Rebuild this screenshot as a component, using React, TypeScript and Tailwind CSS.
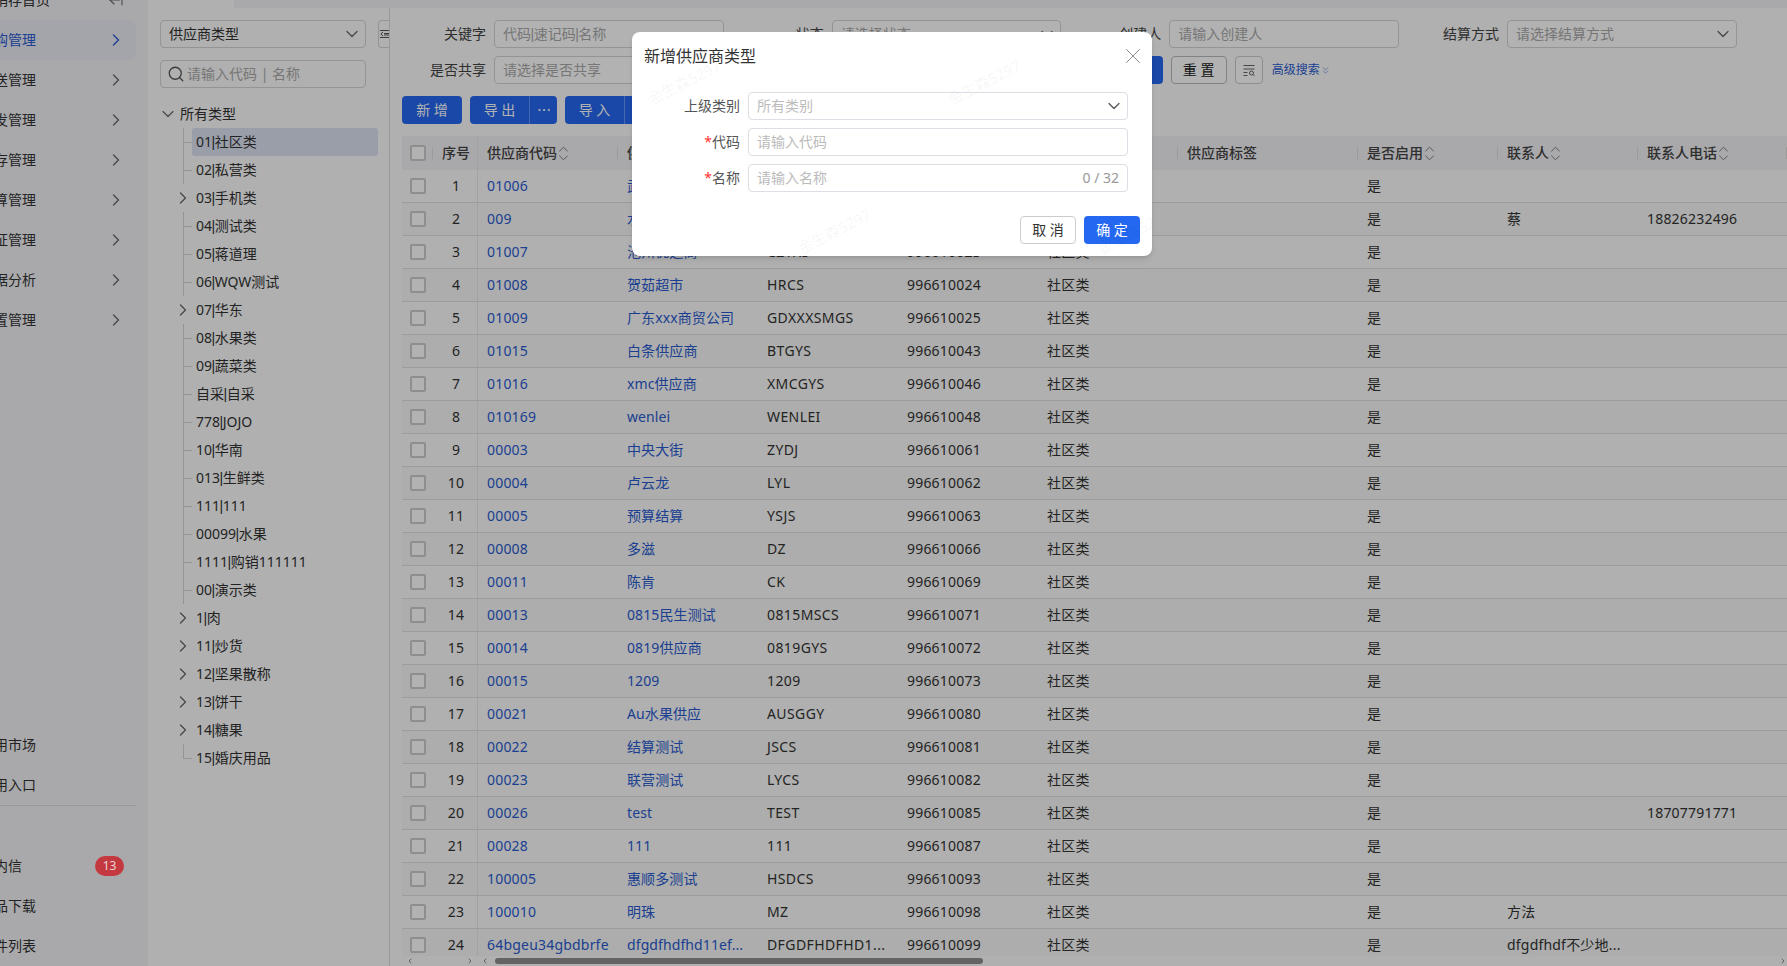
import React from "react";
import { ArrowLeftFromLine, ChevronDown, ChevronRight, ChevronLeft, ChevronsDown, ChevronsUpDown, Ellipsis, Search, X } from "lucide-react";

const FONT = "font-['Noto_Sans','Noto_Sans_CJK_SC',sans-serif]";

const menu = ["采购管理", "配送管理", "批发管理", "库存管理", "结算管理", "认证管理", "数据分析", "配置管理"];

const tree: [string, boolean][] = [
  ["01|社区类", false], ["02|私营类", false], ["03|手机类", true], ["04|测试类", false], ["05|蒋道理", false],
  ["06|WQW测试", false], ["07|华东", true], ["08|水果类", false], ["09|蔬菜类", false], ["自采|自采", false],
  ["778|JOJO", false], ["10|华南", false], ["013|生鲜类", false], ["111|111", false], ["00099|水果", false],
  ["1111|购销111111", false], ["00|演示类", false], ["1|肉", true], ["11|炒货", true], ["12|坚果散称", true],
  ["13|饼干", true], ["14|糖果", true], ["15|婚庆用品", false],
];

const rows: [string, string, string, string, string?, string?][] = [
  ["01006", "武汉供应商", "WHGYS", "996610020"],
  ["009", "水果供应商", "SGGYS", "996610021", "蔡", "18826232496"],
  ["01007", "池州优选商", "CZYXS", "996610023"],
  ["01008", "贺茹超市", "HRCS", "996610024"],
  ["01009", "广东xxx商贸公司", "GDXXXSMGS", "996610025"],
  ["01015", "白条供应商", "BTGYS", "996610043"],
  ["01016", "xmc供应商", "XMCGYS", "996610046"],
  ["010169", "wenlei", "WENLEI", "996610048"],
  ["00003", "中央大街", "ZYDJ", "996610061"],
  ["00004", "卢云龙", "LYL", "996610062"],
  ["00005", "预算结算", "YSJS", "996610063"],
  ["00008", "多滋", "DZ", "996610066"],
  ["00011", "陈肯", "CK", "996610069"],
  ["00013", "0815民生测试", "0815MSCS", "996610071"],
  ["00014", "0819供应商", "0819GYS", "996610072"],
  ["00015", "1209", "1209", "996610073"],
  ["00021", "Au水果供应", "AUSGGY", "996610080"],
  ["00022", "结算测试", "JSCS", "996610081"],
  ["00023", "联营测试", "LYCS", "996610082"],
  ["00026", "test", "TEST", "996610085", "", "18707791771"],
  ["00028", "111", "111", "996610087"],
  ["100005", "惠顺多测试", "HSDCS", "996610093"],
  ["100010", "明珠", "MZ", "996610098", "方法"],
  ["64bgeu34gbdbrfe", "dfgdfhdfhd11ef...", "DFGDFHDFHD1...", "996610099", "dfgdfhdf不少地..."],
];

const COLS = "grid grid-cols-[31px_45px_140px_140px_140px_140px_140px_180px_140px_140px_149px]";

function Piped({ text }: { text: string }) {
  const parts = text.split("|");
  return (
    <>
      {parts.map((p, i) => (
        <React.Fragment key={i}>
          {i > 0 && <span className="mx-[-0.5px] font-['Liberation_Sans',sans-serif]">|</span>}
          {p}
        </React.Fragment>
      ))}
    </>
  );
}

function Head({ label, sort }: { label: string; sort?: boolean }) {
  return (
    <div className="relative flex items-center pl-[9px] font-medium text-[#444]">
      {label}
      {sort && <ChevronsUpDown size={19} strokeWidth={1.2} className="-ml-[3px] text-[#777]" />}
      <span className="absolute right-0 top-[11px] h-[12px] w-px bg-[#ddd]" />
    </div>
  );
}

function Field({ label, placeholder, select }: { label: string; placeholder: string; select?: boolean }) {
  return (
    <div className="flex items-center pr-4">
      <label className="w-[84px] shrink-0 text-right text-[#444]">{label}</label>
      <div className="ml-2 flex h-7 flex-1 items-center justify-between rounded-[4px] border border-[#d5d5d5] bg-white pl-2 pr-[3px]">
        <span className="truncate text-[#aaa]"><Piped text={placeholder} /></span>
        {select && <ChevronDown size={20} strokeWidth={1.5} className="shrink-0 text-[#666]" />}
      </div>
    </div>
  );
}

function Watermarks() {
  const marks: { x: number; y: number }[] = [];
  for (let r = 0; r < 7; r++) {
    for (let c = 0; c < 7; c++) {
      marks.push({ x: (r % 2 ? 234 : 84) + c * 300, y: 82 + r * 149 });
    }
  }
  return (
    <>
      {marks.map((m, i) => (
        <span
          key={i}
          className="pointer-events-none absolute -translate-x-1/2 -translate-y-1/2 -rotate-[27deg] whitespace-nowrap text-[15px] text-black/[0.025]"
          style={{ left: m.x, top: m.y }}
        >
          金生森5297
        </span>
      ))}
    </>
  );
}

function ModalField({ label, req, placeholder, children }: { label: string; req?: boolean; placeholder: string; children?: React.ReactNode }) {
  return (
    <div className="flex items-center">
      <label className="w-[97px] shrink-0 text-right text-[#555]">
        {req && <span className="text-[#f33]">*</span>}
        {label}
      </label>
      <div className="ml-2 flex h-7 w-[380px] items-center justify-between rounded-[4px] border border-[#dcdfe6] bg-white pl-2 pr-[3px]">
        <span className="text-[#bbb]">{placeholder}</span>
        {children}
      </div>
    </div>
  );
}

function MenuRow({ text }: { text: string }) {
  return (
    <div className="flex h-10 items-center">
      <span className="-ml-5">{text}</span>
    </div>
  );
}

export default function App() {
  return (
    <div className={`${FONT} relative flex h-[966px] w-[1787px] overflow-hidden bg-[#fcfcfc] text-[14px] leading-5 text-[#333]`}>
      {/* main menu */}
      <aside className="flex w-[148px] shrink-0 flex-col bg-[#f2f2f5] pr-3">
        <div className="-mt-[10px] flex h-5 items-center justify-between pr-3">
          <span className="-ml-5">进销存首页</span>
          <ArrowLeftFromLine size={16} strokeWidth={1.6} className="text-[#666]" />
        </div>
        <nav className="mt-[10px] flex flex-col">
          {menu.map((m, i) => (
            <div
              key={m}
              className={`flex h-10 items-center justify-between pr-[10px] ${i === 0 ? "rounded-r-lg bg-[#ebedf5] text-[#2a5bd0]" : ""}`}
            >
              <span className="-ml-5">{m}</span>
              <ChevronRight size={20} strokeWidth={1.6} className={i === 0 ? "text-[#2a5bd0]" : "text-[#666]"} />
            </div>
          ))}
        </nav>
        <div className="mt-auto flex flex-col">
          <MenuRow text="应用市场" />
          <MenuRow text="应用入口" />
          <div className="border-t border-[#dcdcdf]" />
          <div className="mt-10 flex h-10 items-center justify-between pr-3">
            <span className="-ml-5">站内信</span>
            <span className="relative z-30 flex h-5 w-[29px] items-center justify-center rounded-full bg-[#c4393f] text-[12px] text-[#e8d5d6]">13</span>
          </div>
          <MenuRow text="商品下载" />
          <MenuRow text="文件列表" />
        </div>
      </aside>

      <div className="flex min-w-0 flex-1 flex-col">
        <div className="ml-[86px] h-2 shrink-0 bg-[#f3f3f5]" />
        <div className="flex min-h-0 flex-1">
          {/* tree */}
          <section className="relative w-[242px] shrink-0 border-r border-[#dcdcdc] pl-3 pt-3">
            <div className="flex h-7 w-[206px] items-center justify-between rounded-[4px] border border-[#d5d5d5] pl-2 pr-[3px]">
              <span>供应商类型</span>
              <ChevronDown size={20} strokeWidth={1.5} className="text-[#666]" />
            </div>
            <div className="mt-3 flex h-7 w-[206px] items-center rounded-[4px] border border-[#d5d5d5] pl-[6px]">
              <Search size={18} strokeWidth={1.7} className="shrink-0 text-[#555]" />
              <span className="ml-[2px] text-[#aaa]">请输入代码 | 名称</span>
            </div>
            <div className="absolute right-0 top-3 flex h-7 w-[11px] items-center justify-end rounded-l-[4px] border border-r-0 border-[#d5d5d5] bg-[#fcfcfc]">
              <svg width="9" height="10" viewBox="0 0 9 10" fill="none" stroke="#555" strokeWidth="1">
                <path d="M0 1.500h9M4 4.500h5M4 6h5M0 8.500h9M3 3L0.800 5 3 7" />
              </svg>
            </div>
            <div className="mt-3 flex h-7 items-center">
              <ChevronDown size={20} strokeWidth={1.4} className="-ml-[2px] text-[#666]" />
              <span className="ml-[2px]">所有类型</span>
            </div>
            <ul className="w-[218px]">
              {tree.map(([t, exp], i) => (
                <li key={t} className="relative flex h-7 items-center pl-[32px]">
                  {exp ? (
                    <ChevronRight size={20} strokeWidth={1.5} className="absolute left-[13px] text-[#666]" />
                  ) : (
                    <>
                      <span className={`absolute left-[23px] top-0 w-px bg-[#d5d5d5] ${i === tree.length - 1 ? "h-[14px]" : "h-7"}`} />
                      <span className="absolute left-[23px] top-[14px] h-px w-[9px] bg-[#d5d5d5]" />
                    </>
                  )}
                  <span className={`h-7 flex-1 rounded-[3px] pl-1 leading-7 ${i === 0 ? "bg-[#dde2f3]" : ""}`}><Piped text={t} /></span>
                </li>
              ))}
            </ul>
          </section>

          {/* content */}
          <main className="flex min-w-0 flex-1 flex-col pl-3 pt-3">
            <div className="grid grid-cols-[repeat(4,337.67px)]">
              <Field label="关键字" placeholder="代码|速记码|名称" />
              <Field label="状态" placeholder="请选择状态" select />
              <Field label="创建人" placeholder="请输入创建人" />
              <Field label="结算方式" placeholder="请选择结算方式" select />
            </div>
            <div className="mt-2 flex h-7 items-center">
              <div className="w-[337.67px]"><Field label="是否共享" placeholder="请选择是否共享" select /></div>
              <button className="ml-[367px] h-7 w-14 rounded-[4px] bg-[#2468f2] text-white">查 询</button>
              <button className="ml-2 h-7 w-14 rounded-[4px] border border-[#bbb] bg-white text-[#222]">重 置</button>
              <button className="ml-2 flex h-7 w-7 items-center justify-center rounded-[4px] border border-[#ccc] bg-white">
                <svg width="14" height="14" viewBox="0 0 14 14" fill="none" stroke="#666" strokeWidth="1">
                  <path d="M1.500 2.500h11M1.500 6h11M1.500 9.500h4M1.500 12.500h4" />
                  <circle cx="9.500" cy="10" r="2" />
                  <path d="M11 11.500l1.500 1.500" />
                </svg>
              </button>
              <span className="ml-[9px] flex items-center text-[12px] text-[#2a5bd0]">
                高级搜索
                <ChevronsDown size={11} strokeWidth={1.6} className="text-[#6f8fd8]" />
              </span>
            </div>
            <div className="mt-3 flex h-7 items-center gap-2 text-white">
              <button className="h-7 w-[60px] rounded-[4px] bg-[#2468f2]">新 增</button>
              <div className="flex h-7 w-[87px] overflow-hidden rounded-[4px] bg-[#2468f2]">
                <button className="w-[59px]">导 出</button>
                <button className="flex flex-1 items-center justify-center border-l border-white/30"><Ellipsis size={16} strokeWidth={1.5} /></button>
              </div>
              <div className="flex h-7 w-[87px] overflow-hidden rounded-[4px] bg-[#2468f2]">
                <button className="w-[59px]">导 入</button>
                <button className="flex flex-1 items-center justify-center border-l border-white/30"><Ellipsis size={16} strokeWidth={1.5} /></button>
              </div>
            </div>

            {/* table */}
            <div className="mt-3 min-h-0 flex-1 overflow-hidden">
              <div className={`${COLS} h-[34px] bg-[#f2f2f5]`}>
                <div className="relative flex items-center pl-2">
                  <span className="h-4 w-4 rounded-[2px] border-2 border-[#ccc] bg-white" />
                  <span className="absolute right-0 top-[11px] h-[12px] w-px bg-[#ddd]" />
                </div>
                <div className="flex items-center justify-center border-r border-[#e8e8e8] pl-[2px] font-medium text-[#444]">序号</div>
                <Head label="供应商代码" sort />
                <Head label="供应商名称" sort />
                <Head label="助记码" />
                <Head label="供应商编号" />
                <Head label="类型" />
                <Head label="供应商标签" />
                <Head label="是否启用" sort />
                <Head label="联系人" sort />
                <Head label="联系人电话" sort />
              </div>
              {rows.map((r, i) => (
                <div key={i} className={`${COLS} h-[33px] items-center border-b border-[#e0e0e0] tracking-[0.2px] ${i % 2 ? "bg-[#f6f8f6]" : ""}`}>
                  <div className="pl-2"><span className="block h-4 w-4 rounded-[2px] border-2 border-[#ccc] bg-white" /></div>
                  <div className="flex h-full items-center justify-center border-r border-[#e8e8e8] pl-[2px]">{i + 1}</div>
                  <div className="truncate pl-[9px] text-[#2a5bd0]">{r[0]}</div>
                  <div className="truncate pl-[9px] tracking-[0.1px] text-[#2a5bd0]">{r[1]}</div>
                  <div className="truncate pl-[9px] tracking-[0.4px]">{r[2]}</div>
                  <div className="truncate pl-[9px]">{r[3]}</div>
                  <div className="truncate pl-[9px]">社区类</div>
                  <div />
                  <div className="pl-[9px]">是</div>
                  <div className="truncate pl-[9px]">{r[4]}</div>
                  <div className="truncate pl-[9px]">{r[5]}</div>
                </div>
              ))}
            </div>
            <div className="flex h-[10px] shrink-0 items-center bg-[#fcfcfc]">
              <div className="flex w-[76px] items-center justify-between px-1 text-[#888]">
                <ChevronLeft size={8} strokeWidth={3} /><ChevronRight size={8} strokeWidth={3} />
              </div>
              <ChevronLeft size={8} strokeWidth={3} className="ml-[3px] text-[#888]" />
              <div className="ml-[6px] h-[6px] w-[488px] rounded-full bg-[#8f8f8f]" />
              <div className="flex-1" />
              <ChevronRight size={8} strokeWidth={3} className="text-[#888]" />
            </div>
          </main>
        </div>
      </div>

      <Watermarks />

      {/* overlay */}
      <div className="absolute inset-0 z-10 bg-black/30" />

      {/* modal */}
      <div className="absolute left-[632px] top-8 z-20 flex h-[224px] w-[520px] flex-col rounded-lg bg-white px-[11px] shadow-md">
        <div className="flex h-[60px] items-start justify-between pt-[14px]">
          <h2 className="ml-px text-[16px] leading-5 text-[#333]">新增供应商类型</h2>
          <X size={26} strokeWidth={0.9} className="-mr-[5px] -mt-[3px] text-[#888]" />
        </div>
        <div className="flex flex-col gap-2">
          <ModalField label="上级类别" placeholder="所有类别">
            <ChevronDown size={20} strokeWidth={1.5} className="shrink-0 text-[#555]" />
          </ModalField>
          <ModalField label="代码" req placeholder="请输入代码" />
          <ModalField label="名称" req placeholder="请输入名称">
            <span className="mr-[5px] shrink-0 text-[#999]">0 / 32</span>
          </ModalField>
        </div>
        <div className="mt-6 flex justify-end gap-2 pr-px">
          <button className="h-7 w-14 rounded-[4px] border border-[#ccc] bg-white text-[#333]">取 消</button>
          <button className="h-7 w-14 rounded-[4px] bg-[#2468f2] text-white">确 定</button>
        </div>
        <div className="pointer-events-none absolute inset-0 overflow-hidden rounded-lg">
          <span className="absolute left-[52px] top-[50px] -translate-x-1/2 -translate-y-1/2 -rotate-[27deg] whitespace-nowrap text-[15px] text-black/[0.05]">金生森5297</span>
          <span className="absolute left-[352px] top-[50px] -translate-x-1/2 -translate-y-1/2 -rotate-[27deg] whitespace-nowrap text-[15px] text-black/[0.05]">金生森5297</span>
          <span className="absolute left-[202px] top-[199px] -translate-x-1/2 -translate-y-1/2 -rotate-[27deg] whitespace-nowrap text-[15px] text-black/[0.05]">金生森5297</span>
          <span className="absolute left-[502px] top-[199px] -translate-x-1/2 -translate-y-1/2 -rotate-[27deg] whitespace-nowrap text-[15px] text-black/[0.05]">金生森5297</span>
        </div>
      </div>
    </div>
  );
}
